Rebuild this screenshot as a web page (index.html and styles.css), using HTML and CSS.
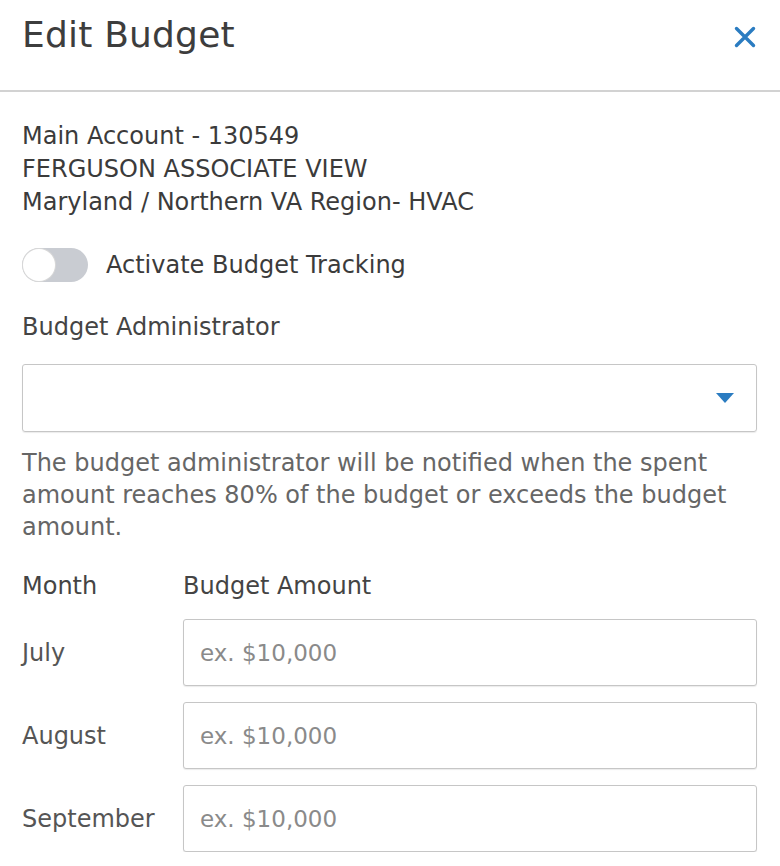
FILE: index.html
```html
<!DOCTYPE html>
<html>
<head>
    <title>Edit Budget</title>
    <meta name="viewport" content="width=device-width, initial-scale=1.0">
    <link rel="stylesheet" href="styles.css">
</head>
<body>
    <div class="modal-header">
        <h2 class="modal-title">Edit Budget</h2>
        <button class="close-btn" aria-label="Close">
            <svg width="22" height="22" viewBox="0 0 22 22">
                <path d="M2.5 2.5 L19.5 19.5 M19.5 2.5 L2.5 19.5" stroke="#2b7cc1" stroke-width="3.4" stroke-linecap="round" fill="none"/>
            </svg>
        </button>
    </div>

    <div class="modal-body">
        <div class="account-info">
            <div>Main Account - 130549</div>
            <div>FERGUSON ASSOCIATE VIEW</div>
            <div>Maryland / Northern VA Region- HVAC</div>
        </div>

        <label class="toggle-row">
            <span class="toggle"><span class="knob"></span></span>
            <span>Activate Budget Tracking</span>
        </label>

        <div class="field-label">Budget Administrator</div>
        <div class="select-box">
            <svg width="18" height="10" viewBox="0 0 18 10">
                <path d="M0 0 L18 0 L9 10 Z" fill="#2b7cc1"/>
            </svg>
        </div>
        <p class="help-text">The budget administrator will be notified when the spent amount reaches 80% of the budget or exceeds the budget amount.</p>

        <div class="budget-grid">
            <div class="col-head">Month</div>
            <div class="col-head">Budget Amount</div>

            <div class="month">July</div>
            <input class="amount" type="text" placeholder="ex. $10,000">

            <div class="month">August</div>
            <input class="amount" type="text" placeholder="ex. $10,000">

            <div class="month">September</div>
            <input class="amount" type="text" placeholder="ex. $10,000">
        </div>
    </div>
</body>
</html>
```

FILE: styles.css
```css
body { margin: 0; font-family: "DejaVu Sans", "Liberation Sans", sans-serif; color: #3b3b3b; background: #fff; }

.modal-header { display: flex; justify-content: space-between; align-items: flex-start; padding: 14px 22px 0 22px; height: 76px; border-bottom: 2px solid #d2d2d2; }
.modal-title { margin: 0; font-size: 36px; font-weight: normal; line-height: 42px; color: #3d3d3d; letter-spacing: 0.2px; }
.close-btn { background: none; border: none; padding: 0; margin-top: 12px; margin-right: 2px; cursor: pointer; }

.modal-body { padding: 0 23px 0 22px; }

.account-info { margin-top: 28px; font-size: 24px; line-height: 33px; }

.toggle-row { display: flex; align-items: center; gap: 18px; margin-top: 28px; height: 36px; font-size: 24px; }
.toggle { width: 66px; height: 34px; border-radius: 17px; background: #c9ccd2; position: relative; }
.knob { position: absolute; left: 1px; top: 1px; width: 32px; height: 32px; border-radius: 50%; background: #fff; box-shadow: 0 0 0 1px #d8d8d8; }

.field-label { margin-top: 28px; font-size: 24px; line-height: 33px; color: #444; }

.select-box { margin-top: 20px; height: 66px; border: 1px solid #c6c6c6; border-radius: 3px; display: flex; justify-content: flex-end; align-items: center; padding-right: 22px; box-shadow: 0 1px 1px rgba(0,0,0,0.08); }

.help-text { margin: 15px 0 0 0; font-size: 24px; line-height: 32px; color: #666; }

.budget-grid { display: grid; grid-template-columns: 161px 1fr; row-gap: 16px; align-items: center; margin-top: 27px; }
.col-head { font-size: 24px; line-height: 33px; color: #444; }
.month { font-size: 24px; color: #555; }
.amount { height: 67px; box-sizing: border-box; border: 1px solid #c6c6c6; border-radius: 3px; padding: 0 16px; font-family: inherit; font-size: 23px; color: #444; box-shadow: 0 1px 1px rgba(0,0,0,0.08); }
.amount::placeholder { color: #8a8a8a; }
```
